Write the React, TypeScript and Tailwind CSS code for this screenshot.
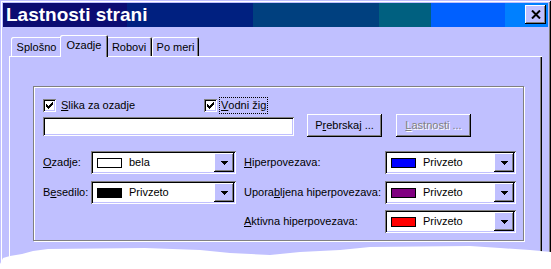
const raised =
  "shadow-[inset_-1px_-1px_0_#000,inset_1px_1px_0_#fff,inset_-2px_-2px_0_#808080]";
const sunken =
  "shadow-[inset_1px_1px_0_#808080,inset_-1px_-1px_0_#fff,inset_2px_2px_0_#000,inset_-2px_-2px_0_#c0c0ff]";

function CheckBox() {
  return (
    <span className={`flex h-[13px] w-[13px] shrink-0 items-center justify-center bg-white ${sunken}`}>
      <svg width="7" height="7" viewBox="0 0 7 7" shapeRendering="crispEdges">
        <path
          d="M6 0h1v1h-1z M5 1h2v1h-2z M0 2h1v1h-1z M4 2h3v1h-3z M0 3h2v1h-2z M3 3h3v1h-3z M0 4h5v1h-5z M1 5h3v1h-3z M2 6h1v1h-1z"
          fill="#000"
        />
      </svg>
    </span>
  );
}

function Arrow() {
  return (
    <svg width="7" height="4" viewBox="0 0 7 4" shapeRendering="crispEdges">
      <path d="M0 0h7v1h-1v1h-1v1h-1v1h-1v-1h-1v-1h-1v-1h-1z" fill="#000" />
    </svg>
  );
}

function Combo({ swatch, text, className }: { swatch: string; text: string; className: string }) {
  return (
    <div className={`flex h-[23px] items-center bg-white pl-[6px] pr-[2px] ${sunken} ${className}`}>
      <span className={`h-[10px] w-[25px] border border-black ${swatch}`} />
      <span className="ml-[7px]">{text}</span>
      <span className={`ml-auto flex h-[19px] w-[20px] items-center justify-center bg-[#c0c0ff] ${raised}`}>
        <Arrow />
      </span>
    </div>
  );
}

function Tab({ children, className }: { children: React.ReactNode; className: string }) {
  return (
    <div
      className={`flex h-[19px] justify-center rounded-t-[2px] pt-[5px] shadow-[inset_1px_1px_0_#fff,inset_-1px_0_0_#000,inset_-2px_0_0_#808080] ${className}`}
    >
      {children}
    </div>
  );
}

export default function App() {
  return (
    <div className="relative h-[269px] w-[551px] overflow-hidden bg-white font-['Liberation_Sans',Arial,sans-serif] text-[11px] leading-none text-black">
      <div className="flex h-[300px] flex-col bg-[#c0c0ff] p-[3px] shadow-[inset_1px_1px_0_#c0c0ff,inset_-1px_-1px_0_#000,inset_2px_2px_0_#fff,inset_-2px_-2px_0_#808080]">
        {/* title bar */}
        <div className="flex h-[24px] bg-[linear-gradient(90deg,#0c0c72_124px,#002080_124px_250px,#00407f_250px_376px,#006080_376px_428px,#0060ff_428px_502px,#0080ff_502px)]">
          <span className="pl-[3px] text-[19px] font-bold leading-[24px] text-white">Lastnosti strani</span>
          <button
            className={`ml-auto mr-[2px] mt-[2px] flex h-[19px] w-[21px] items-center justify-center bg-[#c0c0ff] ${raised}`}
          >
            <svg width="10" height="9" viewBox="0 0 10 9">
              <path d="M1 0.5 L9 8.5 M9 0.5 L1 8.5" stroke="#000" strokeWidth="2" />
            </svg>
          </button>
        </div>

        {/* tabs */}
        <div className="mt-[8px] flex h-[21px] items-end pl-[8px]">
          <Tab className="w-[51px]">Splošno</Tab>
          <div className="relative z-10 -mx-[2px] -mb-px flex h-[22px] w-[48px] justify-center rounded-t-[2px] bg-[#c0c0ff] pt-[5px] shadow-[inset_1px_1px_0_#fff,inset_-1px_0_0_#000,inset_-2px_0_0_#808080]">
            Ozadje
          </div>
          <Tab className="w-[46px]">Robovi</Tab>
          <Tab className="w-[47px]">Po meri</Tab>
        </div>

        {/* panel */}
        <div className="mx-[6px] flex-1 pl-[24px] pt-[30px] shadow-[inset_1px_1px_0_#fff,inset_-1px_-1px_0_#000,inset_-2px_-2px_0_#808080]">
          <div className="h-[155px] w-[491px] border border-[#808080] pl-[9px] pt-[10px] shadow-[inset_1px_1px_0_#fff,1px_1px_0_#fff]">
            <div className="flex h-[17px] items-center">
              <div className="flex w-[161px] items-center">
                <CheckBox />
                <span className="ml-[5px]">
                  <span className="underline">S</span>lika za ozadje
                </span>
              </div>
              <CheckBox />
              <span className="ml-[2px] flex h-[17px] items-center border border-dotted border-black px-px">
                <span className="underline">V</span>odni žig
              </span>
            </div>

            <div className="flex h-[23px] items-start">
              <div className={`mt-[3px] h-[19px] w-[251px] bg-white ${sunken}`} />
              <button className={`ml-[13px] flex h-[23px] w-[75px] items-center justify-center bg-[#c0c0ff] ${raised}`}>
                <span>
                  P<span className="underline">r</span>ebrskaj ...
                </span>
              </button>
              <button
                className={`ml-[14px] flex h-[23px] w-[75px] items-center justify-center bg-[#c0c0ff] text-[#808080] [text-shadow:1px_1px_0_#fff] ${raised}`}
              >
                <span>
                  <span className="underline">L</span>astnosti ...
                </span>
              </button>
            </div>

            <div className="mt-[14px] flex h-[23px] items-center">
              <span className="w-[48px]">
                <span className="underline">O</span>zadje:
              </span>
              <Combo swatch="bg-white" text="bela" className="w-[145px]" />
              <span className="ml-[8px] w-[141px]">
                <span className="underline">H</span>iperpovezava:
              </span>
              <Combo swatch="bg-[#0000ff]" text="Privzeto" className="w-[131px]" />
            </div>

            <div className="mt-[7px] flex h-[23px] items-center">
              <span className="w-[48px]">
                B<span className="underline">e</span>sedilo:
              </span>
              <Combo swatch="bg-black" text="Privzeto" className="w-[145px]" />
              <span className="ml-[8px] w-[141px]">
                Upora<span className="underline">b</span>ljena hiperpovezava:
              </span>
              <Combo swatch="bg-[#800080]" text="Privzeto" className="w-[131px]" />
            </div>

            <div className="mt-[6px] flex h-[23px] items-center pl-[201px]">
              <span className="w-[141px]">
                <span className="underline">A</span>ktivna hiperpovezava:
              </span>
              <Combo swatch="bg-[#ff0000]" text="Privzeto" className="w-[131px]" />
            </div>
          </div>
        </div>
      </div>

      {/* torn paper edge */}
      <svg className="pointer-events-none absolute left-0 top-0" width="551" height="269" viewBox="0 0 551 269">
        <polygon
          fill="#fff"
          points="0,264 3,258 10,256 22,254 33,251 48,249 145,248 200,250 230,253 270,255 300,252 340,250 370,247 470,246 500,248 530,250 551,252 551,269 0,269"
        />
      </svg>
    </div>
  );
}
